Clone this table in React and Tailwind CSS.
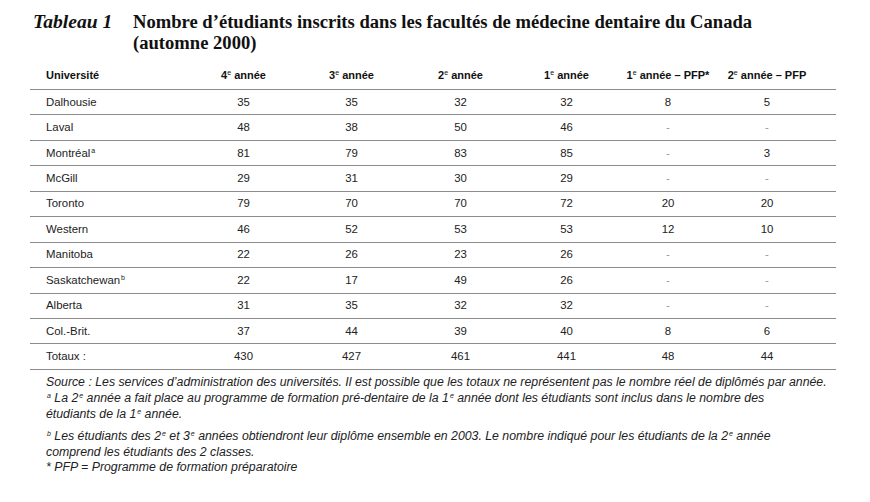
const rows = [
  { name: "Dalhousie", vals: ["35", "35", "32", "32", "8", "5"] },
  { name: "Laval", vals: ["48", "38", "50", "46", "-", "-"] },
  { name: "Montréal", sup: "a", vals: ["81", "79", "83", "85", "-", "3"] },
  { name: "McGill", vals: ["29", "31", "30", "29", "-", "-"] },
  { name: "Toronto", vals: ["79", "70", "70", "72", "20", "20"] },
  { name: "Western", vals: ["46", "52", "53", "53", "12", "10"] },
  { name: "Manitoba", vals: ["22", "26", "23", "26", "-", "-"] },
  { name: "Saskatchewan", sup: "b", vals: ["22", "17", "49", "26", "-", "-"] },
  { name: "Alberta", vals: ["31", "35", "32", "32", "-", "-"] },
  { name: "Col.-Brit.", vals: ["37", "44", "39", "40", "8", "6"] },
  { name: "Totaux :", vals: ["430", "427", "461", "441", "48", "44"] },
];

const headers = [
  ["4", " année"],
  ["3", " année"],
  ["2", " année"],
  ["1", " année"],
  ["1", " année – PFP*"],
  ["2", " année – PFP"],
];

const cols = "grid grid-cols-[160px_107px_109px_109px_103px_100px_98px_1fr]";

const Sup = ({ children }) => (
  <span className="text-[7px] leading-none relative -top-[4px] ml-[1px]">{children}</span>
);

export default function App() {
  return (
    <div className="w-[870px] h-[502px] bg-white text-[#1a1a1a] overflow-hidden">
      {/* Title */}
      <div className="flex items-start pl-[33px] pt-[11px] font-['Liberation_Serif',serif] font-bold leading-[21px] text-[#111]">
        <div className="w-[100px] shrink-0 italic text-[19.6px]">Tableau 1</div>
        <div className="text-[18.6px]">
          Nombre d’étudiants inscrits dans les facultés de médecine dentaire du Canada
          <br />
          (automne 2000)
        </div>
      </div>

      {/* Table */}
      <div className="ml-[30px] w-[806px] mt-[9px] font-['Liberation_Sans',Arial,sans-serif] text-[11.4px]">
        <div className={`${cols} h-[28px] items-center font-bold text-[11px] text-[#111] border-b border-[#8c8c8c]`}>
          <div className="pl-[16px]">Université</div>
          {headers.map(([n, rest], i) => (
            <div key={i} className="text-center whitespace-nowrap">
              {n}
              <span className="text-[7px] relative -top-[4px] font-normal">e</span>
              {rest}
            </div>
          ))}
          <div />
        </div>
        {rows.map((r) => (
          <div
            key={r.name}
            className={`${cols} h-[25.45px] items-center text-[#222] border-b border-[#8c8c8c]`}
          >
            <div className="pl-[16px]">
              {r.name}
              {r.sup && <Sup>{r.sup}</Sup>}
            </div>
            {r.vals.map((v, i) => (
              <div key={i} className={`text-center ${v === "-" ? "text-[#999]" : ""}`}>
                {v}
              </div>
            ))}
            <div />
          </div>
        ))}

        {/* Notes */}
        <div className="pl-[16px] pt-[4px] italic text-[12.3px] leading-[16px] text-[#222]">
          <p>
            Source : Les services d’administration des universités. Il est possible que les totaux ne représentent pas le nombre réel de diplômés par année.
          </p>
          <p>
            <Sup>a</Sup> La 2<Sup>e</Sup> année a fait place au programme de formation pré-dentaire de la 1<Sup>e</Sup> année dont les étudiants sont inclus dans le nombre des
            <br />
            étudiants de la 1<Sup>e</Sup> année.
          </p>
          <p className="mt-[6px]">
            <Sup>b</Sup> Les étudiants des 2<Sup>e</Sup> et 3<Sup>e</Sup> années obtiendront leur diplôme ensemble en 2003. Le nombre indiqué pour les étudiants de la 2<Sup>e</Sup> année
            <br />
            comprend les étudiants des 2 classes.
          </p>
          <p className="-mt-[1px]">* PFP = Programme de formation préparatoire</p>
        </div>
      </div>
    </div>
  );
}
